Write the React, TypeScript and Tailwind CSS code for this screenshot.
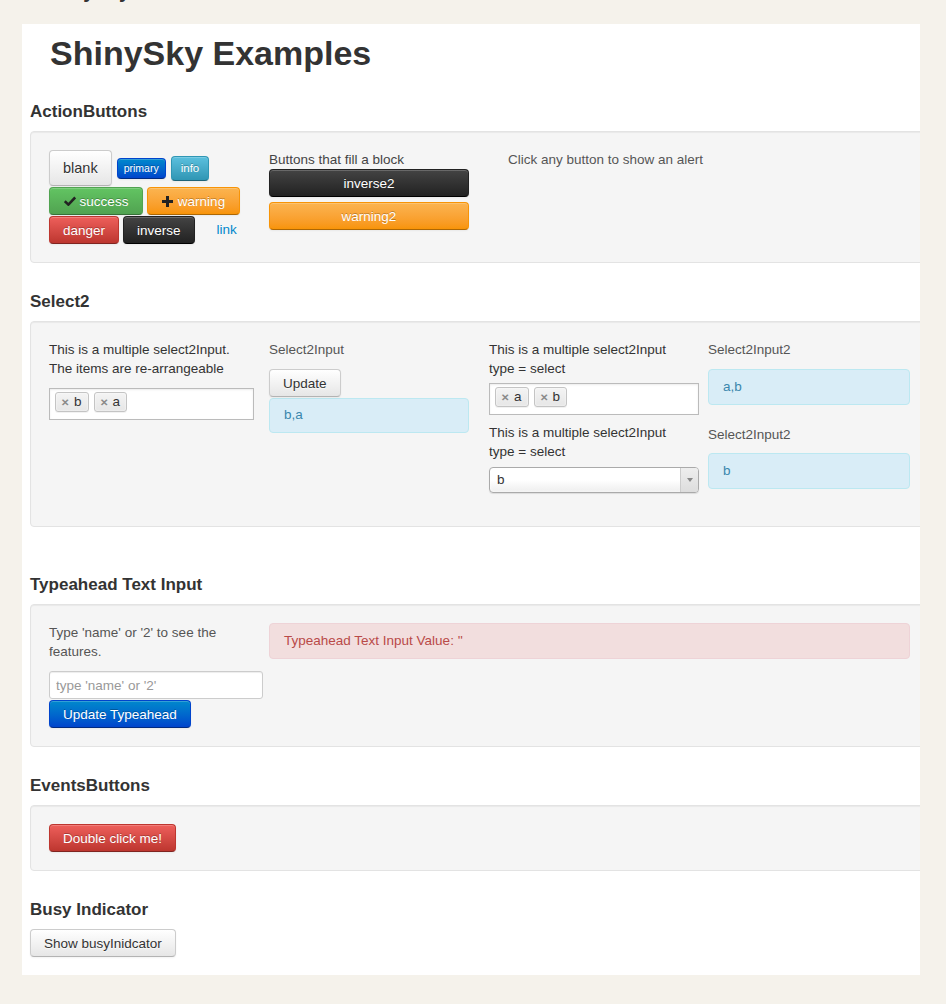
import React from "react";

const font = "font-['Liberation_Sans',Arial,Helvetica,sans-serif]";

const btnBase =
  "inline-flex items-center justify-center rounded-[4px] border leading-[19px] whitespace-nowrap shadow-[inset_0_1px_0_rgba(255,255,255,0.2),0_1px_2px_rgba(0,0,0,0.05)]";

const btnColors: Record<string, string> = {
  blank:
    "bg-linear-to-b from-white to-[#e6e6e6] border-[#cccccc] border-b-[#b3b3b3] text-[#333] [text-shadow:0_1px_1px_rgba(255,255,255,0.75)]",
  primary:
    "bg-linear-to-b from-[#0088cc] to-[#0044cc] border-[#0044cc] border-b-[#002a80] text-white [text-shadow:0_-1px_0_rgba(0,0,0,0.25)]",
  info: "bg-linear-to-b from-[#5bc0de] to-[#2f96b4] border-[#2f96b4] border-b-[#1f6377] text-white [text-shadow:0_-1px_0_rgba(0,0,0,0.25)]",
  success:
    "bg-linear-to-b from-[#62c462] to-[#51a351] border-[#51a351] border-b-[#387038] text-white [text-shadow:0_-1px_0_rgba(0,0,0,0.25)]",
  warning:
    "bg-linear-to-b from-[#fbb450] to-[#f89406] border-[#f89406] border-b-[#ad6704] text-white [text-shadow:0_-1px_0_rgba(0,0,0,0.25)]",
  danger:
    "bg-linear-to-b from-[#ee5f5b] to-[#bd362f] border-[#bd362f] border-b-[#802420] text-white [text-shadow:0_-1px_0_rgba(0,0,0,0.25)]",
  inverse:
    "bg-linear-to-b from-[#444444] to-[#222222] border-[#222] border-b-[#000] text-white [text-shadow:0_-1px_0_rgba(0,0,0,0.25)]",
};

const Btn = ({
  kind = "blank",
  size = "h-[28px] px-[13px] text-[13.5px]",
  className = "",
  children,
}: {
  kind?: string;
  size?: string;
  className?: string;
  children: React.ReactNode;
}) => <button className={`${btnBase} ${btnColors[kind]} ${size} ${className}`}>{children}</button>;

const OkIcon = () => (
  <svg width="12" height="10" viewBox="0 0 12 10" className="mr-[4px]">
    <path d="M0.8 5.2 L4.4 8.6 L11.2 1.4" fill="none" stroke="#222" strokeWidth="2.6" />
  </svg>
);

const PlusIcon = () => (
  <svg width="11" height="11" viewBox="0 0 11 11" className="mr-[5px]">
    <path d="M4 0h3v4h4v3H7v4H4V7H0V4h4z" fill="#222" />
  </svg>
);

const Heading = ({ children, top = "mt-[29px]" }: { children: React.ReactNode; top?: string }) => (
  <h4 className={`${top} mb-[9px] text-[17px] leading-[20px] font-bold text-[#333]`}>{children}</h4>
);

const Well = ({ children }: { children: React.ReactNode }) => (
  <div className="w-[920px] rounded-[4px] border border-[#e3e3e3] bg-[#f5f5f5] p-[18px] shadow-[inset_0_1px_1px_rgba(0,0,0,0.05)]">
    {children}
  </div>
);

const Tag = ({ label }: { label: string }) => (
  <span className="flex h-[20px] items-center rounded-[3px] border border-[#c4c4c4] bg-linear-to-b from-[#f4f4f4] to-[#e6e6e6] pr-[6px] pl-[5px] text-[13.5px] text-[#333] shadow-[0_0_2px_white_inset,0_1px_0_rgba(0,0,0,0.05)]">
    <span className="mr-[5px] text-[10px] font-bold text-[#8a8a8a]">✕</span>
    {label}
  </span>
);

const MultiSelect = ({ tags, w }: { tags: string[]; w: string }) => (
  <div className={`${w} flex h-[32px] items-start gap-[5px] border border-[#bbbbbb] bg-white pt-[3px] pl-[5px] shadow-[inset_0_1px_2px_rgba(0,0,0,0.08)]`}>
    {tags.map((t) => (
      <Tag key={t} label={t} />
    ))}
  </div>
);

const InfoBox = ({ text, h = "h-[35px]", className = "" }: { text: string; h?: string; className?: string }) => (
  <div className={`${h} ${className} flex items-center rounded-[4px] border border-[#bce8f1] bg-[#d9edf7] px-[14px] text-[13.5px] text-[#3a87ad]`}>
    {text}
  </div>
);

export default function App() {
  return (
    <div className={`min-h-screen bg-[#f5f2eb] ${font} text-[#333]`}>
      <div className="h-[24px] overflow-hidden pl-[40px]">
        <div className="mt-[-21px] text-[20px] leading-[24px] font-bold text-[#333]">ShinySky</div>
      </div>

      <div className="ml-[22px] w-[898px] overflow-hidden bg-white pb-[18px] pl-[8px]">
        <h1 className="pt-[9px] pl-[20px] text-[34px] leading-[40px] font-bold text-[#333]">ShinySky Examples</h1>

        <Heading>ActionButtons</Heading>
        <Well>
          <div className="flex items-start">
            <div className="flex w-[200px] flex-col gap-[1px]">
              <div className="flex h-[36px] items-center gap-[5px]">
                <Btn size="h-[36px] px-[13px] text-[14.5px]">blank</Btn>
                <Btn kind="primary" size="h-[21px] px-[6px] text-[10.5px]">
                  primary
                </Btn>
                <Btn kind="info" size="h-[25px] px-[9px] text-[11.5px]">
                  info
                </Btn>
              </div>
              <div className="flex h-[28px] items-center gap-[4px]">
                <Btn kind="success" size="h-[28px] w-[94px] text-[13.5px]">
                  <OkIcon />
                  success
                </Btn>
                <Btn kind="warning" size="h-[28px] w-[93px] text-[13.5px]">
                  <PlusIcon />
                  warning
                </Btn>
              </div>
              <div className="flex h-[28px] items-center gap-[4px]">
                <Btn kind="danger">danger</Btn>
                <Btn kind="inverse">inverse</Btn>
                <span className="ml-[18px] text-[13.5px] text-[#0088cc]">link</span>
              </div>
            </div>

            <div className="ml-[20px] w-[200px]">
              <p className="text-[13.5px] leading-[19px] text-[#444]">Buttons that fill a block</p>
              <Btn kind="inverse" className="w-full">
                inverse2
              </Btn>
              <Btn kind="warning" className="mt-[5px] w-full">
                warning2
              </Btn>
            </div>

            <div className="ml-[39px] text-[13.5px] leading-[19px] text-[#555]">Click any button to show an alert</div>
          </div>
        </Well>

        <Heading>Select2</Heading>
        <Well>
          <div className="flex items-start">
            <div className="w-[200px]">
              <p className="mb-[10px] text-[13.5px] leading-[19px] text-[#333]">
                This is a multiple select2Input.
                <br />
                The items are re-arrangeable
              </p>
              <MultiSelect tags={["b", "a"]} w="w-[205px]" />
            </div>

            <div className="ml-[20px] w-[200px]">
              <p className="mb-[10px] text-[13.5px] leading-[19px] text-[#555]">Select2Input</p>
              <Btn>Update</Btn>
              <InfoBox text="b,a" className="mt-[1px]" />
            </div>

            <div className="ml-[20px] w-[200px]">
              <p className="mb-[5px] text-[13.5px] leading-[19px] text-[#333]">
                This is a multiple select2Input
                <br />
                type = select
              </p>
              <MultiSelect tags={["a", "b"]} w="w-[210px]" />
              <p className="mt-[8px] mb-[6px] text-[13.5px] leading-[19px] text-[#333]">
                This is a multiple select2Input
                <br />
                type = select
              </p>
              <div className="flex h-[26px] w-[210px] items-stretch overflow-hidden rounded-[4px] border border-[#aaaaaa] bg-linear-to-b from-white from-50% to-[#eeeeee] shadow-[0_0_3px_white_inset,0_1px_1px_rgba(0,0,0,0.1)]">
                <span className="flex flex-1 items-center pl-[7px] text-[13.5px] text-[#333]">b</span>
                <span className="flex w-[18px] items-center justify-center border-l border-[#cccccc] bg-linear-to-b from-[#eeeeee] to-[#dddddd]">
                  <svg width="6" height="4" viewBox="0 0 6 4">
                    <path d="M0 0h6L3 4z" fill="#888" />
                  </svg>
                </span>
              </div>
            </div>

            <div className="ml-[19px] w-[202px]">
              <p className="mb-[10px] text-[13.5px] leading-[19px] text-[#555]">Select2Input2</p>
              <InfoBox text="a,b" h="h-[36px]" className="mb-[20px]" />
              <p className="mb-[9px] text-[13.5px] leading-[19px] text-[#555]">Select2Input2</p>
              <InfoBox text="b" h="h-[36px]" className="mb-[19px]" />
            </div>
          </div>
        </Well>

        <Heading top="mt-[48px]">Typeahead Text Input</Heading>
        <Well>
          <div className="flex items-start">
            <div className="w-[200px]">
              <p className="mb-[10px] text-[13.5px] leading-[19px] text-[#555]">
                Type &apos;name&apos; or &apos;2&apos; to see the
                <br />
                features.
              </p>
              <input
                placeholder="type 'name' or '2'"
                className="block h-[28px] w-[214px] rounded-[3px] border border-[#cccccc] bg-white px-[6px] text-[13.5px] text-[#555] shadow-[inset_0_1px_1px_rgba(0,0,0,0.075)] outline-none placeholder:text-[#999]"
              />
              <Btn kind="primary" className="mt-[1px]">
                Update Typeahead
              </Btn>
            </div>
            <div className="ml-[20px] flex h-[36px] w-[641px] items-center rounded-[4px] border border-[#eed3d7] bg-[#f2dede] px-[14px] text-[13.5px] text-[#b94a48]">
              Typeahead Text Input Value: &apos;&apos;
            </div>
          </div>
        </Well>

        <Heading>EventsButtons</Heading>
        <Well>
          <Btn kind="danger">Double click me!</Btn>
        </Well>

        <Heading>Busy Indicator</Heading>
        <Btn>Show busyInidcator</Btn>
      </div>
    </div>
  );
}
